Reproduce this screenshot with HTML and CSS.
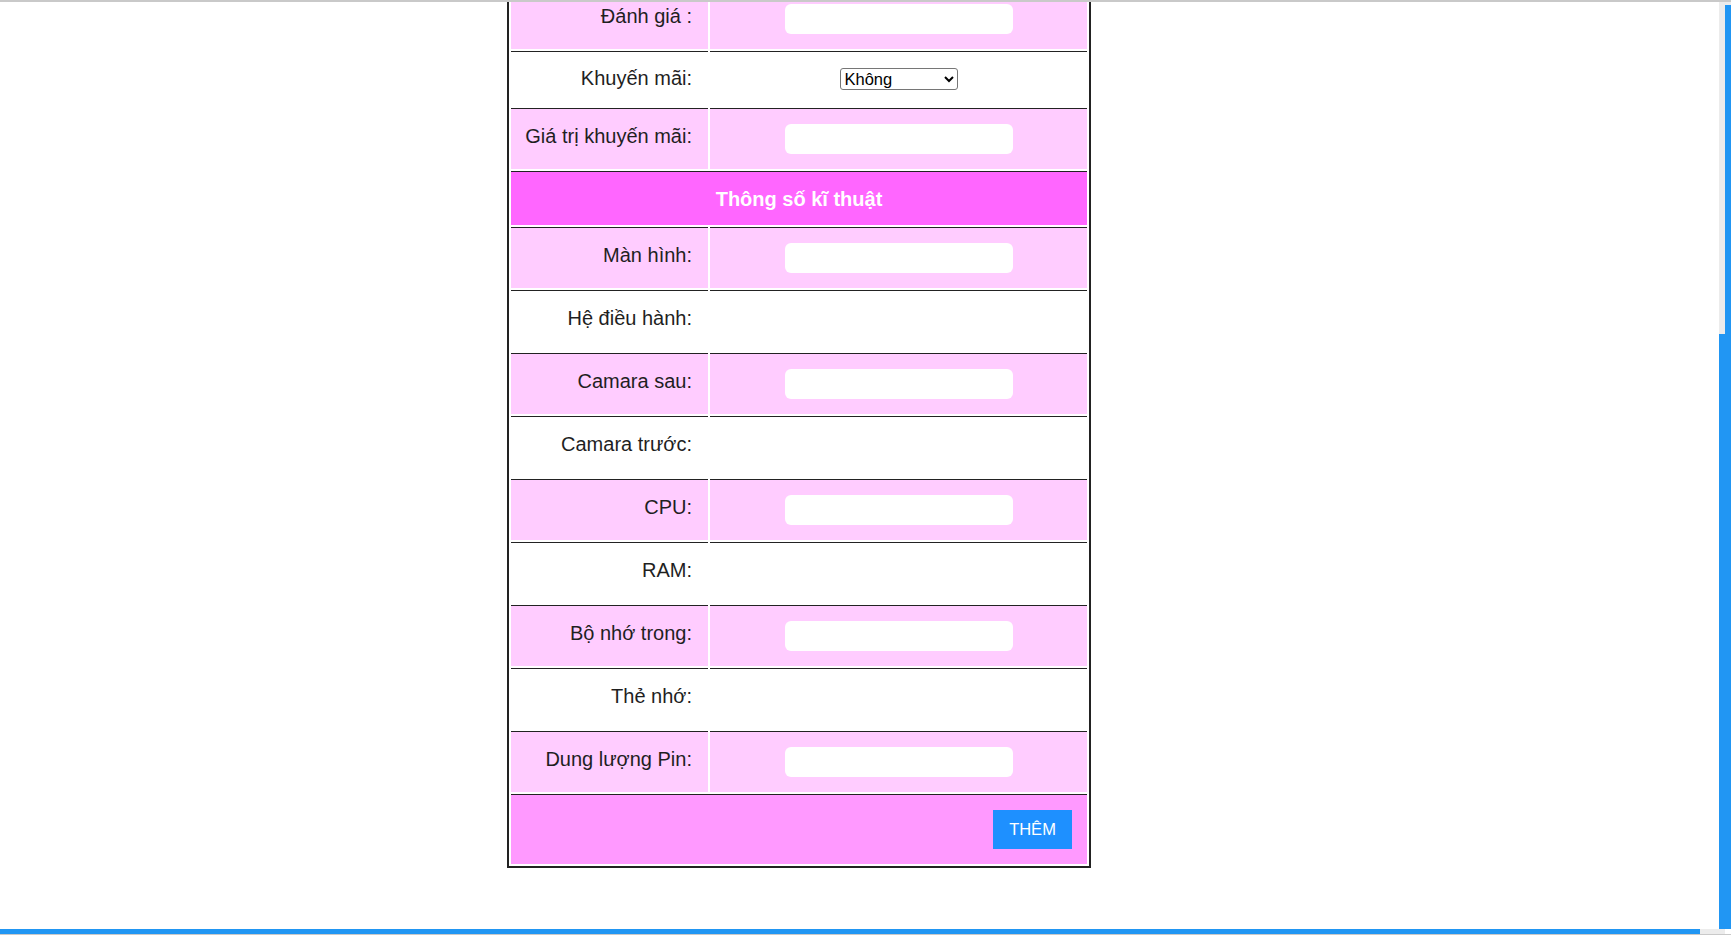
FILE: index.html
```html
<!DOCTYPE html>
<html lang="vi">
<head>
<meta charset="utf-8">
<title>Thêm sản phẩm</title>
<link rel="stylesheet" href="styles.css">
</head>
<body>
<div class="topline"></div>
<div class="frame">
  <main class="viewport">
    <form class="product-form">
      <table class="form-table">
        <colgroup><col class="col-label"><col class="col-field"></colgroup>
        <tr class="row-pink"><td class="label">Đánh giá :</td><td class="field"><input class="text-input" type="text"></td></tr>
        <tr class="row-white"><td class="label">Khuyến mãi:</td><td class="field"><select class="select"><option>Không</option><option>Có</option></select></td></tr>
        <tr class="row-pink"><td class="label">Giá trị khuyến mãi:</td><td class="field"><input class="text-input" type="text"></td></tr>
        <tr class="row-head"><th colspan="2">Thông số kĩ thuật</th></tr>
        <tr class="row-pink"><td class="label">Màn hình:</td><td class="field"><input class="text-input" type="text"></td></tr>
        <tr class="row-white"><td class="label">Hệ điều hành:</td><td class="field"><input class="text-input" type="text"></td></tr>
        <tr class="row-pink"><td class="label">Camara sau:</td><td class="field"><input class="text-input" type="text"></td></tr>
        <tr class="row-white"><td class="label">Camara trước:</td><td class="field"><input class="text-input" type="text"></td></tr>
        <tr class="row-pink"><td class="label">CPU:</td><td class="field"><input class="text-input" type="text"></td></tr>
        <tr class="row-white"><td class="label">RAM:</td><td class="field"><input class="text-input" type="text"></td></tr>
        <tr class="row-pink"><td class="label">Bộ nhớ trong:</td><td class="field"><input class="text-input" type="text"></td></tr>
        <tr class="row-white"><td class="label">Thẻ nhớ:</td><td class="field"><input class="text-input" type="text"></td></tr>
        <tr class="row-pink"><td class="label">Dung lượng Pin:</td><td class="field"><input class="text-input" type="text"></td></tr>
        <tr class="row-submit"><td colspan="2"><button class="btn-add" type="button">THÊM</button></td></tr>
      </table>
    </form>
  </main>
  <div class="vscroll">
    <div class="vtrack-inner"><span class="vtrack-empty"></span><span class="vthumb"></span></div>
    <div class="vtrack-outer"><span class="outer-top"></span><span class="outer-thumb"></span></div>
  </div>
</div>
<div class="hscroll"><span class="hthumb"></span><span class="htrack"></span><span class="hcorner"></span></div>
<div class="bottomline"></div>
</body>
</html>
```
FILE: styles.css
```css
html, body {
  margin: 0;
  padding: 0;
}
body {
  height: 935px;
  overflow: hidden;
  display: flex;
  flex-direction: column;
  background: #fff;
  font-family: "Liberation Sans", Arial, sans-serif;
}
.topline {
  flex: none;
  height: 2px;
  background: #c9c9c9;
}
.frame {
  flex: none;
  height: 927px;
  display: flex;
}
.viewport {
  flex: 1;
  min-width: 0;
  overflow: hidden;
}
.vscroll {
  flex: none;
  width: 12px;
  display: flex;
}
.vtrack-inner, .vtrack-outer {
  width: 6px;
  display: flex;
  flex-direction: column;
}
.vtrack-empty {
  height: 332px;
  background: #ececec;
}
.vthumb, .outer-thumb {
  flex: 1;
  background: #2196f3;
}
.outer-top {
  height: 3px;
  background: #ececec;
}
.hscroll {
  flex: none;
  height: 5px;
  display: flex;
}
.hthumb {
  width: 1700px;
  background: #2196f3;
}
.htrack {
  width: 25px;
  background: #ececec;
}
.hcorner {
  flex: 1;
  background: #fff;
}
.bottomline {
  flex: none;
  height: 1px;
  background: #c9c9c9;
}

.product-form {
  margin: 0;
}
.form-table {
  margin: -18px 0 0 507px;
  border: 2px solid #222;
  border-spacing: 2px;
  table-layout: fixed;
  width: 584px;
}
.col-label { width: 197px; }
.col-field { width: 377px; }

.form-table td, .form-table th {
  border-top: 1px solid #222;
  vertical-align: baseline;
}
.row-pink td { background: #ffccff; }
.row-white td { background: #fff; }

.label {
  text-align: right;
  padding: 15px 16px 15px 0;
  font-size: 20px;
  color: #1f1f1f;
  white-space: nowrap;
}
.field {
  padding: 15px 0;
  text-align: center;
}
.text-input {
  box-sizing: border-box;
  width: 228px;
  height: 30px;
  margin: 0;
  padding: 0 8px 2px;
  border: none;
  border-radius: 6px;
  background: #fff;
  font-size: 13.33px;
  font-family: "Liberation Sans", Arial, sans-serif;
  vertical-align: baseline;
  outline: none;
}
.select {
  margin: 0 0 1px;
  width: 118px;
  height: 22px;
  font-family: "Liberation Sans", Arial, sans-serif;
  font-size: 16.5px;
  color: #000;
  background: #fff;
  border: 1px solid #767676;
  border-radius: 3px;
}
.row-head th {
  background: #ff66ff;
  color: #fff;
  font-weight: bold;
  font-size: 20px;
  text-align: center;
  padding: 16px 0 14px;
}
.row-submit td {
  background: #ff99ff;
  text-align: right;
  padding: 15px 15px 15px 0;
}
.btn-add {
  width: 79px;
  height: 39px;
  margin: 0;
  padding: 0;
  border: none;
  background: #1e90ff;
  color: #fff;
  font-family: "Liberation Sans", Arial, sans-serif;
  font-size: 16.5px;
  vertical-align: baseline;
}
```
